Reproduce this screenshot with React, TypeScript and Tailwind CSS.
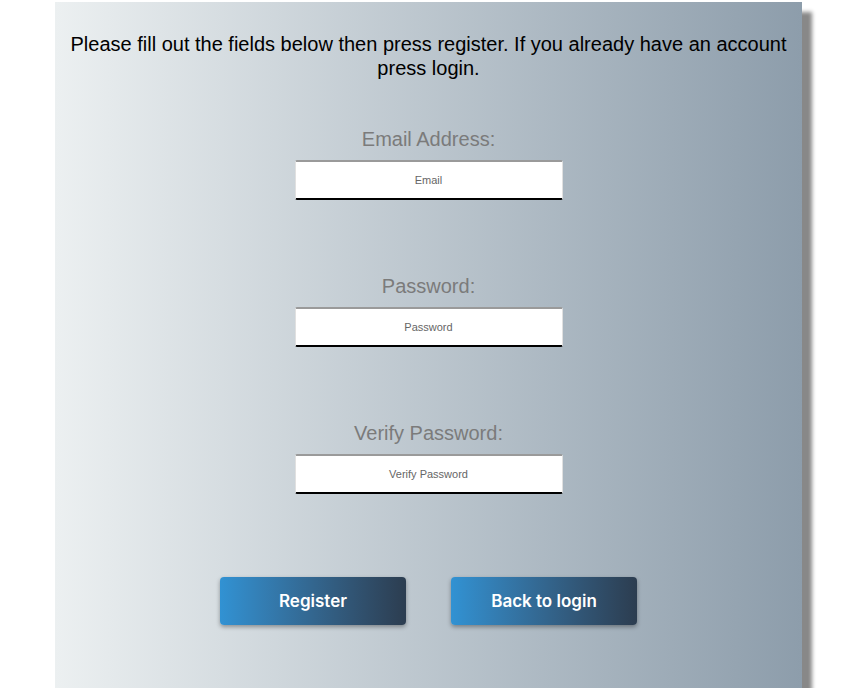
const fields = [
  { label: "Email Address:", placeholder: "Email", type: "email" },
  { label: "Password:", placeholder: "Password", type: "password" },
  { label: "Verify Password:", placeholder: "Verify Password", type: "password" },
];

function Field({ label, placeholder, type }: { label: string; placeholder: string; type: string }) {
  return (
    <div className="flex flex-col items-center">
      <label className="text-[20px] leading-6 text-[#7b7b7b]">{label}</label>
      <input
        type={type}
        placeholder={placeholder}
        className="mt-[9px] h-[40px] w-[268px] rounded-[2px] border-x border-t-2 border-b-2 border-x-[#e0e0e0] border-t-[#9a9a9a] border-b-black bg-white text-center text-[11px] text-[#555] placeholder:text-[#666] outline-none"
      />
    </div>
  );
}

export default function App() {
  return (
    <div className="min-h-[688px] overflow-hidden bg-white font-['Liberation_Sans',Arial,sans-serif]">
      <div className="ml-[55px] mt-[2px] min-h-[700px] w-[747px] bg-gradient-to-r from-[#ecf0f1] to-[#8d9dab] px-[8px] pt-[30px] shadow-[10px_10px_4px_#888]">
        <p className="text-center text-[20px] leading-6 text-black">
          Please fill out the fields below then press register. If you already have an account press login.
        </p>
        <div className="mt-[47px] flex flex-col gap-[74px]">
          {fields.map((f) => (
            <Field key={f.label} {...f} />
          ))}
        </div>
        <div className="mt-[83px] flex justify-center gap-[45px]">
          <button className="h-[48px] w-[186px] rounded-[4px] bg-gradient-to-r from-[#3192d3] to-[#2c3d50] pt-[2px] text-[17px] font-semibold text-white shadow-[0_2px_4px_rgba(0,0,0,0.35)] font-['Inter',sans-serif]">
            Register
          </button>
          <button className="h-[48px] w-[186px] rounded-[4px] bg-gradient-to-r from-[#3192d3] to-[#2c3d50] pt-[2px] text-[17px] font-semibold text-white shadow-[0_2px_4px_rgba(0,0,0,0.35)] font-['Inter',sans-serif]">
            Back to login
          </button>
        </div>
      </div>
    </div>
  );
}
